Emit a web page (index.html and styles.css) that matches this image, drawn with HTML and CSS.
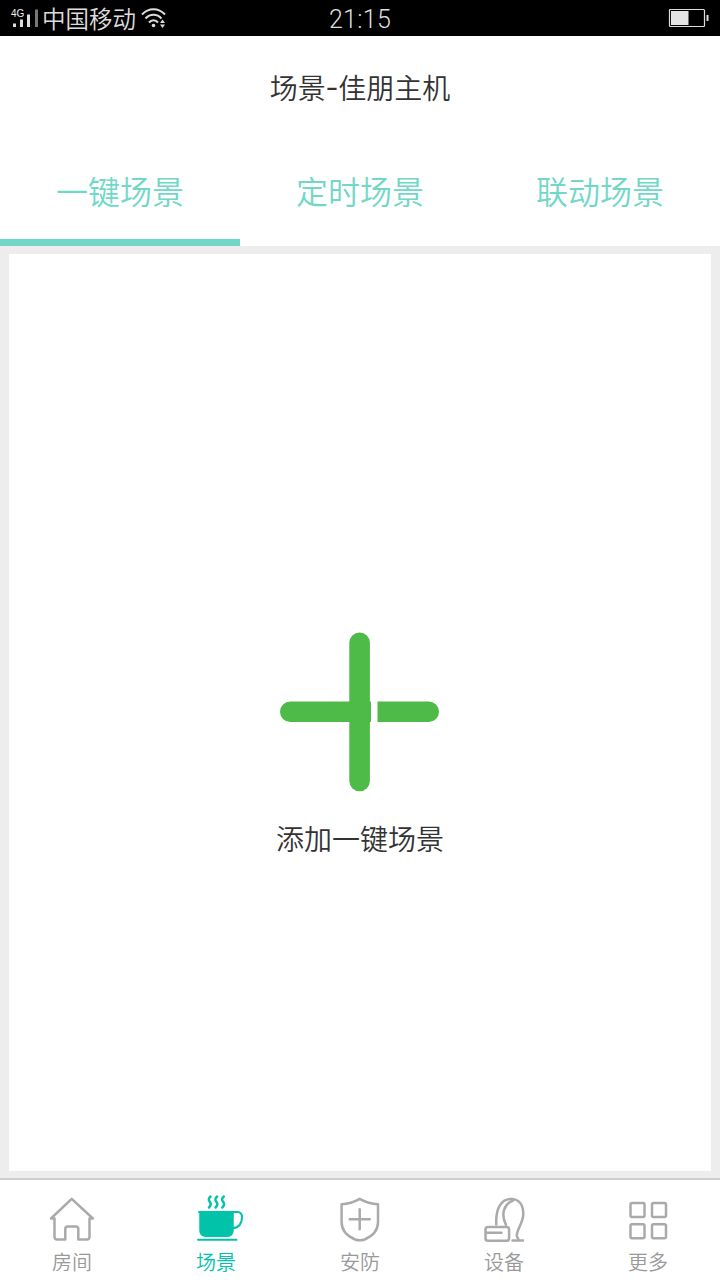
FILE: index.html
```html
<!DOCTYPE html>
<html lang="zh-CN">
<head>
    <meta charset="UTF-8">
    <meta name="viewport" content="width=device-width, initial-scale=1.0">
    <title>场景</title>
    <link rel="stylesheet" href="styles.css">
</head>
<body>
    <div class="status-bar">
        <div class="status-left">
            <svg class="signal" width="30" height="24" viewBox="0 0 30 24">
                <text class="network" x="0" y="10.500">4G</text>
                <path d="M2 17.500h3v3.500h-3zM9 13.500h3v7.500h-3zM16 8.500h3v12.500h-3z" fill="#ddd"/>
                <path d="M24 3.500h3v17.500h-3z" fill="#777"/>
            </svg>
            <span class="carrier">中国移动</span>
            <svg class="wifi" width="26" height="22" viewBox="0 0 26 22">
                <g fill="none" stroke="#ddd" stroke-width="2">
                    <path d="M1 7.500C7.500.500 17.500.500 24 7.500"/>
                    <path d="M4.500 11.500c4.500-5 11.500-5 16 0"/>
                    <path d="M8 15.500c2.500-3 6.500-3 9 0"/>
                </g>
                <circle cx="12.500" cy="18.500" r="1.800" fill="#ddd"/>
                <path d="M19 16l2.500-3.500 2.500 3.500zM19 17.500l2.500 3.500 2.500-3.500z" fill="#ddd"/>
            </svg>
        </div>
        <span class="clock">21:15</span>
        <svg class="battery" width="41" height="20" viewBox="0 0 41 20">
            <rect x="1.500" y="1.500" width="35" height="17" rx="1" fill="none" stroke="#ddd" stroke-width="1.200"/>
            <rect x="3" y="3" width="17.500" height="14" fill="#e4e4e4"/>
            <rect x="38.500" y="7" width="2" height="6" fill="#ddd"/>
        </svg>
    </div>

    <div class="header">
        <h1>场景<span class="dash">-</span>佳朋主机</h1>
    </div>

    <div class="tabs">
        <a class="tab active">一键场景</a>
        <a class="tab">定时场景</a>
        <a class="tab">联动场景</a>
    </div>

    <div class="content">
        <div class="panel">
            <svg class="plus" width="160" height="160" viewBox="0 0 160 160">
                <g fill="#4eba47">
                    <rect x="69.300" y="0.500" width="20.600" height="158.800" rx="10.300"/>
                    <path d="M91 69.500H10.300a10.300 10.300 0 0 0 0 20.600H91z"/>
                    <path d="M97.500 69.500h51.200a10.300 10.300 0 0 1 0 20.600H97.500z"/>
                </g>
            </svg>
            <p>添加一键场景</p>
        </div>
    </div>

    <nav class="bottom-nav">
        <a class="nav-item">
            <svg width="56" height="50" viewBox="0 0 56 50">
                <path d="M10.500 24.500H7L27.700 4.800l21.200 19.700h-3.400V42.800a2.800 2.800 0 0 1-2.800 2.800h-8.400v-10.500a2.500 2.500 0 0 0-2.500-2.500h-8a2.500 2.500 0 0 0-2.500 2.500v10.500h-8a2.800 2.800 0 0 1-2.800-2.800z"/>
            </svg>
            <span>房间</span>
        </a>
        <a class="nav-item active">
            <svg width="56" height="50" viewBox="0 0 56 50">
                <path class="solid" d="M12.500 18.300h32v18.500a5 5 0 0 1-5 5h-22a5 5 0 0 1-5-5z"/>
                <path class="thin" d="M11 18h38.500c3 0 4.500 2 4.500 5.500 0 6-3.500 10.500-9 10.500"/>
                <path class="thin" d="M10 45.700H48.500"/>
                <path d="M22.500 2.500c-5 4.500 2.300 5.500-.2 9.200l-1.300 1.800M29.100 2.500c-5 4.500 2.300 5.500-.2 9.200l-1.300 1.800M35.800 2.500c-5 4.500 2.300 5.500-.2 9.200l-1.300 1.800"/>
            </svg>
            <span>场景</span>
        </a>
        <a class="nav-item">
            <svg width="56" height="50" viewBox="0 0 56 50">
                <path d="M27.700 4.800C23 7.500 16 9.900 9.600 10.200v18c0 8 6 14 13.500 17.300 3 1 6.500 1 9.500 0C40 42.200 46 36.200 46 28.200V10.200C39.500 9.900 32.500 7.500 27.700 4.800z"/>
                <path d="M27.700 15.300v20M17.700 25.300h20"/>
            </svg>
            <span>安防</span>
        </a>
        <a class="nav-item">
            <svg width="56" height="50" viewBox="0 0 56 50">
                <path d="M9.500 38.700V35.500a2.600 2.600 0 0 1 2.600-2.600h18.400a2.600 2.600 0 0 1 2.600 2.600v8.700a2.600 2.600 0 0 1-2.600 2.600H12.100a2.600 2.600 0 0 1-2.600-2.600v-5.500H25.500"/>
                <path d="M20.300 30.500C19.500 15 25 5 35 5c8 0 12.300 6 12.300 15 0 9-7 16-6.500 22l1.500 3M36.500 46.600h10.500"/>
                <path d="M30 31C24.500 20 28 10 37 6.500"/>
            </svg>
            <span>设备</span>
        </a>
        <a class="nav-item">
            <svg width="56" height="50" viewBox="0 0 56 50">
                <rect x="10.500" y="9" width="14" height="14" rx="1.500"/>
                <rect x="32" y="9" width="14" height="14" rx="1.500"/>
                <rect x="10.500" y="30.200" width="14" height="14" rx="1.500"/>
                <rect x="32" y="30.200" width="14" height="14" rx="1.500"/>
            </svg>
            <span>更多</span>
        </a>
    </nav>
</body>
</html>
```

FILE: styles.css
```css
* {
    box-sizing: border-box;
}

body {
    font-family: "Noto Sans CJK SC", sans-serif;
    font-weight: 350;
    margin: 0;
    height: 1280px;
    display: flex;
    flex-direction: column;
    background: white;
    color: #333;
    overflow: hidden;
}

.status-bar {
    height: 36px;
    padding: 0 11px;
    display: grid;
    grid-template-columns: 1fr auto 1fr;
    align-items: center;
    background: black;
    color: #ddd;
}

.status-left {
    display: flex;
    align-items: center;
}

.network {
    font-family: "Liberation Sans", Arial, sans-serif;
    font-size: 10px;
    fill: #eee;
}

.carrier {
    font-size: 23.5px;
    line-height: 36px;
    margin-left: 1px;
}

.wifi {
    margin-left: 5px;
}

.clock {
    font-family: Roboto, sans-serif;
    font-size: 25px;
    letter-spacing: 0.3px;
    line-height: 34px;
    padding-top: 3px;
    height: 36px;
}

.battery {
    justify-self: end;
}

.header {
    height: 102px;
    text-align: center;
}

.header h1 {
    margin: 0;
    font-size: 28px;
    font-weight: 350;
    line-height: 102px;
}

.dash {
    font-size: 36px;
    line-height: 0;
}

.tabs {
    display: flex;
    height: 108px;
}

.tab {
    flex: 1;
    text-align: center;
    font-size: 32px;
    line-height: 105px;
    color: #71d8c8;
    border-bottom: 7px solid transparent;
}

.tab.active {
    border-bottom-color: #71d8c8;
}

.content {
    flex: 1;
    padding: 8px 9px 7px;
    background: #ededed;
}

.panel {
    height: 100%;
    padding-top: 378px;
    display: flex;
    flex-direction: column;
    align-items: center;
    background: white;
}

.panel p {
    margin: 26px 0 0;
    font-size: 28px;
    line-height: 40px;
}

.bottom-nav {
    display: flex;
    height: 102px;
    border-top: 2px solid #cdcdcd;
}

.nav-item {
    flex: 1;
    display: flex;
    flex-direction: column;
    align-items: center;
    padding-top: 14px;
    font-size: 20px;
    line-height: 36px;
    color: #999;
}

.nav-item svg {
    fill: none;
    stroke: #aaa;
    stroke-width: 2.5;
    stroke-linecap: round;
    stroke-linejoin: round;
}

.nav-item.active {
    color: #00c3aa;
}

.nav-item.active svg {
    stroke: #00c3aa;
}

.nav-item .solid {
    fill: #00c3aa;
}

.nav-item .thin {
    stroke-width: 2;
}
```
